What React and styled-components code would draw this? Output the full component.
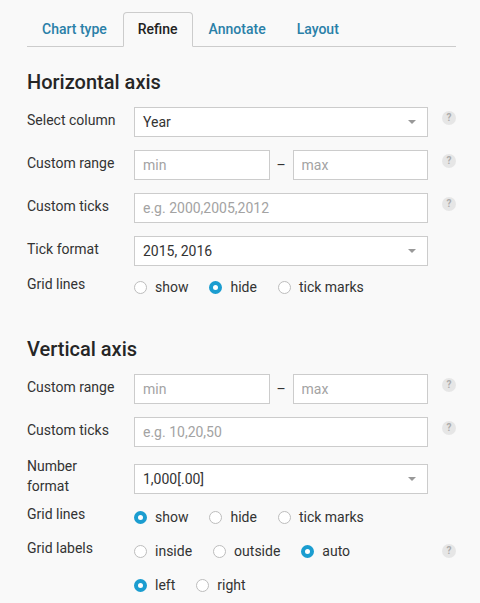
import React from "react"
import styled, { createGlobalStyle } from "styled-components"

const GlobalStyle = createGlobalStyle`
  html, body {
    margin: 0;
    background: #f9f9f9;
  }
  body {
    font-family: Roboto, "Liberation Sans", Arial, sans-serif;
    font-size: 14px;
    color: #333;
  }
  * {
    box-sizing: border-box;
  }
`

const Page = styled.div`
  width: 480px;
  padding: 12px 24px 40px 27px;
`

const TabBar = styled.div`
  display: flex;
  align-items: flex-end;
  border-bottom: 1px solid #ccc;
`

const Tab = styled.div`
  padding: 0 14px;
  margin-right: 1px;
  margin-bottom: -1px;
  line-height: 33px;
  font-size: 14px;
  font-weight: 500;
  color: ${props => (props.$active ? "#222" : "#2a80a8")};
  border: 1px solid ${props => (props.$active ? "#ccc" : "transparent")};
  border-bottom-color: ${props => (props.$active ? "#f9f9f9" : "transparent")};
  border-radius: 4px 4px 0 0;
  background: ${props => (props.$active ? "#f9f9f9" : "transparent")};
`

const Section = styled.section`
  margin-top: 23px;

  & + & {
    margin-top: 40px;
  }
`

const Title = styled.h2`
  margin: 0 0 1px;
  font-size: 20px;
  line-height: 24px;
  font-weight: 500;
  color: #262626;
`

const Row = styled.div`
  display: grid;
  grid-template-columns: 107px 294px 1fr;
  align-items: start;
  margin-top: ${props => props.$gap}px;
`

const Label = styled.div`
  width: 90px;
  padding-top: ${props => props.$offset || 0}px;
  line-height: 20px;
  color: #333;
`

const Input = styled.input`
  display: block;
  width: 100%;
  height: 30px;
  padding: 0 8px;
  border: 1px solid #ccc;
  border-radius: 0;
  background: #fff;
  font: inherit;
  color: #333;
  outline: none;

  &::placeholder {
    color: #a3a3a3;
  }
`

const SelectBox = styled.div`
  display: flex;
  align-items: center;
  justify-content: space-between;
  height: 30px;
  margin-top: ${props => props.$offset || 0}px;
  padding: 0 11px 0 8px;
  border: 1px solid #ccc;
  background: #fff;
  color: #333;
`

const Caret = styled.span`
  width: 0;
  height: 0;
  border-left: 4px solid transparent;
  border-right: 4px solid transparent;
  border-top: 4px solid #999;
`

const Range = styled.div`
  display: grid;
  grid-template-columns: 1fr 23px 1fr;
  align-items: center;
`

const Dash = styled.span`
  text-align: center;
  color: #333;
`

const Help = styled.span`
  justify-self: end;
  width: 14px;
  height: 14px;
  margin-top: ${props => props.$top}px;
  border-radius: 50%;
  background: #e6e6e6;
  color: #acacac;
  font-size: 10px;
  font-weight: 700;
  line-height: 14px;
  text-align: center;
`

const RadioGroup = styled.div`
  display: flex;
  flex-direction: column;
  row-gap: 14px;
  padding-top: 3px;
`

const RadioLine = styled.div`
  display: flex;
  column-gap: 21px;
`

const RadioItem = styled.label`
  display: inline-flex;
  align-items: center;
  line-height: 20px;
  color: #333;
  white-space: nowrap;
`

const Dot = styled.span`
  width: 13px;
  height: 13px;
  margin-right: 8px;
  border-radius: 50%;
  background: #fff;
  border: ${props => (props.$checked ? "4px solid #1b9dd0" : "1px solid #bdbdbd")};
`

const Radios = ({ lines, value }) => (
  <RadioGroup>
    {lines.map((line, i) => (
      <RadioLine key={i}>
        {line.map(opt => (
          <RadioItem key={opt}>
            <Dot $checked={value.includes(opt)} />
            {opt}
          </RadioItem>
        ))}
      </RadioLine>
    ))}
  </RadioGroup>
)

const RangeRow = ({ gap }) => (
  <Row $gap={gap}>
    <Label $offset={3}>Custom range</Label>
    <Range>
      <Input readOnly placeholder="min" />
      <Dash>–</Dash>
      <Input readOnly placeholder="max" />
    </Range>
    <Help $top={4}>?</Help>
  </Row>
)

const App = () => {
  return (
    <Page>
      <GlobalStyle />
      <TabBar>
        <Tab>Chart type</Tab>
        <Tab $active>Refine</Tab>
        <Tab>Annotate</Tab>
        <Tab>Layout</Tab>
      </TabBar>

      <Section>
        <Title>Horizontal axis</Title>
        <Row $gap={13}>
          <Label $offset={3}>Select column</Label>
          <SelectBox>
            Year
            <Caret />
          </SelectBox>
          <Help $top={4}>?</Help>
        </Row>
        <RangeRow gap={13} />
        <Row $gap={13}>
          <Label $offset={3}>Custom ticks</Label>
          <Input readOnly placeholder="e.g. 2000,2005,2012" />
          <Help $top={4}>?</Help>
        </Row>
        <Row $gap={13}>
          <Label $offset={3}>Tick format</Label>
          <SelectBox>
            2015, 2016
            <Caret />
          </SelectBox>
        </Row>
        <Row $gap={8}>
          <Label>Grid lines</Label>
          <Radios lines={[["show", "hide", "tick marks"]]} value={["hide"]} />
        </Row>
      </Section>

      <Section>
        <Title>Vertical axis</Title>
        <RangeRow gap={13} />
        <Row $gap={13}>
          <Label $offset={3}>Custom ticks</Label>
          <Input readOnly placeholder="e.g. 10,20,50" />
          <Help $top={4}>?</Help>
        </Row>
        <Row $gap={9}>
          <Label>Number format</Label>
          <SelectBox $offset={8}>
            1,000[.00]
            <Caret />
          </SelectBox>
        </Row>
        <Row $gap={8}>
          <Label>Grid lines</Label>
          <Radios lines={[["show", "hide", "tick marks"]]} value={["show"]} />
        </Row>
        <Row $gap={11}>
          <Label>Grid labels</Label>
          <Radios
            lines={[
              ["inside", "outside", "auto"],
              ["left", "right"],
            ]}
            value={["auto", "left"]}
          />
          <Help $top={6}>?</Help>
        </Row>
      </Section>
    </Page>
  )
}

export default App
